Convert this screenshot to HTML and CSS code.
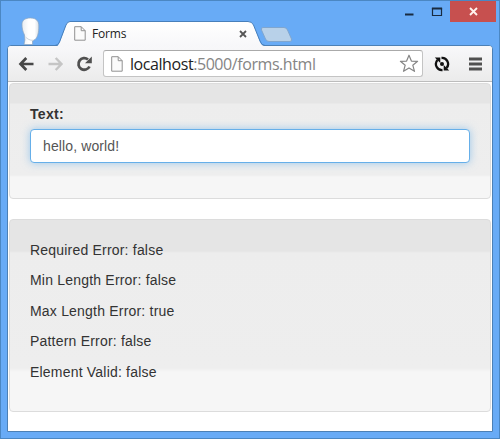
FILE: index.html
```
<!DOCTYPE html>
<html lang="en">
<head>
<meta charset="utf-8">
<title>Forms</title>
<link rel="stylesheet" href="styles.css">
</head>
<body>
<div class="window">
  <header class="titlebar">
    <svg class="avatar" width="20" height="28" viewBox="0 0 20 28">
      <defs><linearGradient id="skin"><stop offset="0" stop-color="#e8edf2"/><stop offset=".4" stop-color="#fff"/><stop offset=".75" stop-color="#fff"/><stop offset="1" stop-color="#d9e0e7"/></linearGradient></defs>
      <path d="M3 27.500Q4.500 23 3.500 18C2 15 .8 11 1 7C1.300 3 4.500 1 9.500 1C15 1 18 4 17.800 9C17.800 15 17 20 14 22.500Q12 23.500 11.500 24V27.500Z" fill="url(#skin)" stroke="#8da5be" stroke-width=".7"/>
      <path d="M4.500 20c2 2 4.500 3.500 7.500 3.300" fill="none" stroke="#cbd3dc"/>
    </svg>
    <div class="tab">
      <svg class="tab-shape" width="212" height="26" viewBox="0 0 212 26">
        <defs><linearGradient id="tabfill" x2="0" y2="1"><stop offset="0" stop-color="#fff"/><stop offset="1" stop-color="#f7f7f9"/></linearGradient></defs>
        <path d="M0 25.500Q3 25.500 4.500 22L11 4Q12.500 .5 15 .5H193Q197 .5 198.500 4L205 21Q206.500 25 210 25V26H0Z" fill="url(#tabfill)"/>
        <path d="M0 24.500Q3 24.500 4.500 21L11 4Q12.500 .5 15 .5H193Q197 .5 198.500 4L205 20Q206.500 24.500 210 24.500" fill="none" stroke="#477fbb"/>
      </svg>
      <svg class="doc" width="12" height="15" viewBox="0 0 12 15"><path d="M.7.7h6.500l4 4v9.500H.7zM7.200.7v4h4" fill="#fbfbfb" stroke="#929292"/></svg>
      <span class="tab-title">Forms</span>
      <svg class="tab-close" width="8" height="8" viewBox="0 0 8 8"><path d="M1 1l6 6M7 1L1 7" stroke="#555" stroke-width="1.800"/></svg>
    </div>
    <svg class="newtab" width="33" height="17" viewBox="0 0 33 17"><path d="M3 1.500H24Q26.500 1.500 27.500 4L31.500 13Q32 15.500 30 15.500H9Q6.500 15.500 5.500 13L1.500 4Q.8 1.500 3 1.500Z" fill="#b8d1e9" stroke="#80a6cf"/></svg>
    <div class="controls">
      <svg width="65" height="22" viewBox="0 0 65 22"><path d="M20 13.500H28.500" stroke="#192b40" stroke-width="2"/><path d="M47.500 7.500H56.500V14.500H47.500Z" fill="none" stroke="#192b40" stroke-width="1.200"/><path d="M46.900 7.500H57.100" stroke="#192b40" stroke-width="2"/></svg>
      <div class="close"><svg width="9" height="9" viewBox="0 0 9 9"><path d="M1 1l7 7M8 1L1 8" stroke="#fff3ee" stroke-width="1.900"/></svg></div>
    </div>
  </header>
  <div class="browser">
    <nav class="toolbar">
      <svg width="17" height="16" viewBox="0 0 17 16"><path d="M8.300 2L2.500 8l5.800 6M2.500 8H15.500" fill="none" stroke="#484848" stroke-width="2.700"/></svg>
      <svg width="17" height="16" viewBox="0 0 17 16"><path d="M8.700 2l5.800 6-5.800 6M14.500 8H1.500" fill="none" stroke="#c5c5c5" stroke-width="2.400"/></svg>
      <svg width="17" height="16" viewBox="0 0 17 16"><path d="M13.500 10.500A5.800 5.800 0 1 1 12 3.500" fill="none" stroke="#505050" stroke-width="2.800"/><path d="M15.800.5V7.300H9Z" fill="#505050"/></svg>
      <div class="address">
        <svg class="page-icon" width="12" height="16" viewBox="0 0 12 16"><path d="M.7.7h6.500l4 4v10.500H.7zM7.200.7v4h4" fill="#fbfbfb" stroke="#929292"/></svg>
        <span class="url"><span class="host">localhost</span>:5000/forms.html</span>
        <svg class="star" width="20" height="19" viewBox="0 0 20 19"><path d="M10 1.200L12.400 7.100L18.600 7.300L13.800 11.200L15.500 17.300L10 13.900L4.500 17.300L6.200 11.200L1.400 7.300L7.600 7.100Z" fill="#fff" stroke="#858585" stroke-width="1.200" stroke-linejoin="round"/></svg>
      </div>
      <svg class="sync" width="16" height="16" viewBox="0 0 16 16"><path d="M8.500 14A6 6 0 0 1 3.500 4M7.500 2A6 6 0 0 1 12.500 12" fill="none" stroke="#111" stroke-width="2.300"/><path d="M.8 1.500H6.300V7ZM15.200 14.500H9.700V9Z" fill="#111"/><circle cx="8" cy="8" r="2" fill="#111"/></svg>
      <svg class="menu" width="13" height="14" viewBox="0 0 13 14"><path d="M0 2H13M0 7H13M0 12H13" stroke="#505050" stroke-width="3"/></svg>
    </nav>
    <main class="page">
      <form class="well well-form">
        <label for="text">Text:</label>
        <input id="text" type="text" value="hello, world!">
      </form>
      <section class="well well-status">
        <p>Required Error: false</p>
        <p>Min Length Error: false</p>
        <p>Max Length Error: true</p>
        <p>Pattern Error: false</p>
        <p>Element Valid: false</p>
      </section>
    </main>
  </div>
</div>
</body>
</html>
```
FILE: styles.css
```
* { box-sizing: border-box; }
body { margin: 0; overflow: hidden; font-family: "Liberation Sans", Arial, sans-serif; }
svg { display: block; flex: none; }
.window {
  width: 500px;
  height: 439px;
  padding: 0 6px 6px;
  background: #68abf6;
  border: 1px solid #4b87c3;
  display: flex;
  flex-direction: column;
}
.titlebar { height: 44px; display: flex; align-items: flex-start; flex: none; }
.avatar { margin: 16px 0 0 14px; }
.tab {
  position: relative;
  width: 206px;
  height: 25px;
  margin: 20px 0 0 14px;
  padding: 0 14px 0 19px;
  display: flex;
  align-items: center;
}
.tab-shape { position: absolute; left: 0; top: 0; width: 212px; z-index: 1; }
.doc, .tab-title, .tab-close { position: relative; z-index: 2; }
.tab-title { margin-left: 6px; font: 12px/16px "Open Sans", sans-serif; letter-spacing: -.2px; color: #222; }
.tab-close { margin-left: auto; }
.newtab { margin: 25px 0 0 -1px; }
.controls { margin: 0 -3px 0 auto; display: flex; }
.close {
  width: 46px;
  height: 21px;
  padding-right: 0;
  background: #c7504f;
  display: flex;
  align-items: center;
  justify-content: center;
}
.browser {
  flex: 1;
  display: flex;
  flex-direction: column;
  border: 1px solid #4c80b5;
  border-radius: 4px 4px 0 0;
  background: #fff;
}
.toolbar {
  height: 36px;
  flex: none;
  display: flex;
  align-items: center;
  gap: 12px;
  padding: 0 10px;
  background: linear-gradient(#f8f8fa, #ebebeb);
  border-bottom: 1px solid #bcbcbc;
  border-radius: 3px 3px 0 0;
}
.address {
  width: 320px;
  height: 27px;
  margin-left: -2px;
  padding: 0 3px 0 7px;
  display: flex;
  align-items: center;
  background: #fff;
  border: 1px solid #c4c4c4;
  border-top-color: #aaa;
  border-radius: 3px;
}
.url { margin-left: 7px; font: 16px/24px "Open Sans", sans-serif; letter-spacing: -.43px; color: #858585; white-space: nowrap; }
.host { color: #222; }
.star { margin-left: auto; }
.sync { margin-left: -1px; }
.menu { margin-left: auto; }
.page { flex: 1; padding: 1px; }
.well { border: 1px solid #dcdcdc; border-radius: 4px; font-size: 14px; line-height: 20px; color: #333; }
.well-form {
  height: 116px;
  padding: 20px;
  background: linear-gradient(#e5e5e5 19px, #ededed 20px, #eee 91px, #f6f6f6 93px);
}
.well-form label { display: block; font-weight: bold; letter-spacing: .3px; margin-bottom: 5px; }
.well-form input {
  display: block;
  width: 100%;
  height: 34px;
  padding: 6px 12px;
  border: 1px solid #66afe9;
  border-radius: 4px;
  outline: 0;
  box-shadow: 0 0 8px rgba(102, 175, 233, .6);
  background: #fff;
  color: #555;
  font: 14px/20px "Liberation Sans", Arial, sans-serif;
  letter-spacing: .12px;
}
.well-status {
  height: 193px;
  margin-top: 20px;
  padding: 20px;
  background: linear-gradient(#e5e5e5 31px, #ededed 33px, #eee 148px, #f6f6f6 152px);
  letter-spacing: .2px;
}
.well-status p { margin: 0 0 10.4px; }
```
